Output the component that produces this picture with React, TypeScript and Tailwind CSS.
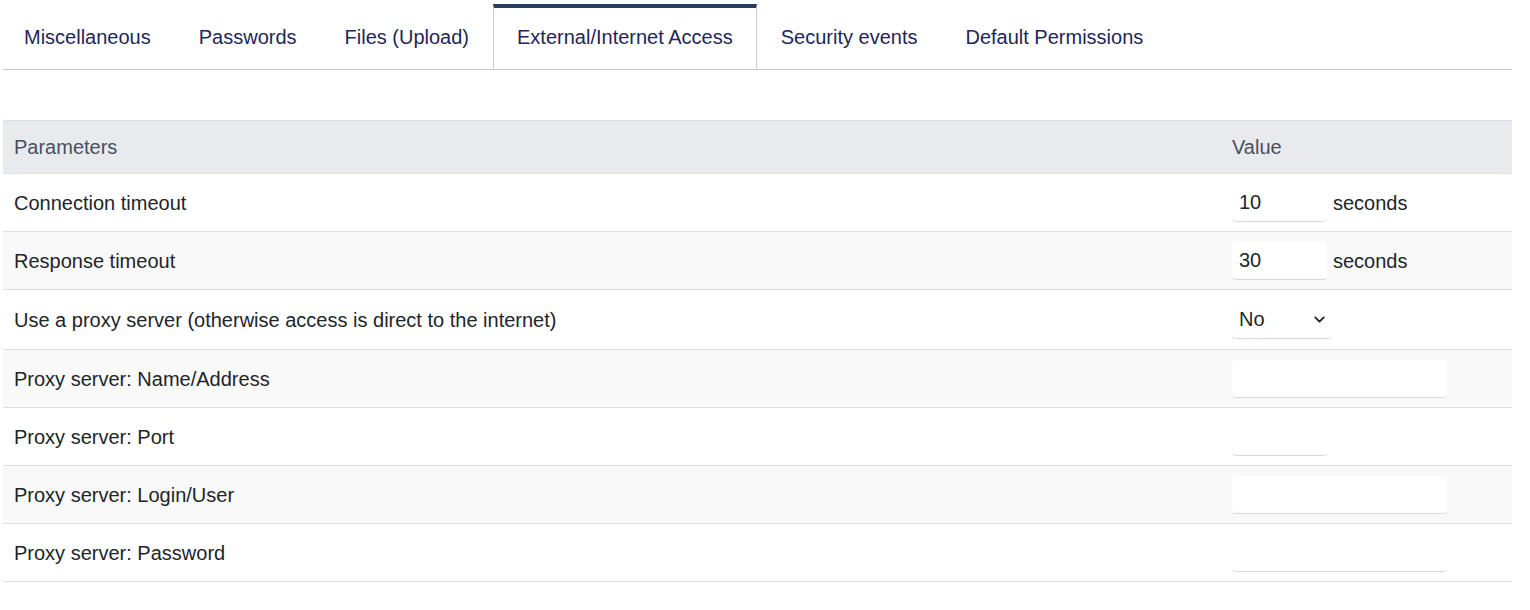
import { ChevronDown } from "lucide-react";

const tabs = [
  "Miscellaneous",
  "Passwords",
  "Files (Upload)",
  "External/Internet Access",
  "Security events",
  "Default Permissions",
];

type Row = {
  label: string;
  kind: "num" | "select" | "wide" | "short";
  value?: string;
  unit?: string;
  tall?: boolean;
};

const rows: Row[] = [
  { label: "Connection timeout", kind: "num", value: "10", unit: "seconds" },
  { label: "Response timeout", kind: "num", value: "30", unit: "seconds" },
  { label: "Use a proxy server (otherwise access is direct to the internet)", kind: "select", value: "No", tall: true },
  { label: "Proxy server: Name/Address", kind: "wide" },
  { label: "Proxy server: Port", kind: "short" },
  { label: "Proxy server: Login/User", kind: "wide" },
  { label: "Proxy server: Password", kind: "wide" },
];

function ValueCell({ row }: { row: Row }) {
  if (row.kind === "select") {
    return (
      <div className="w-[100px] h-[38px] bg-white rounded border-b border-[#d9d9d9] flex items-center justify-between pl-[7px] pr-[4px] text-[#212529]">
        <span>{row.value}</span>
        <ChevronDown size={17} strokeWidth={2.5} className="text-[#222]" />
      </div>
    );
  }
  const width = row.kind === "wide" ? "w-[215px]" : "w-[95px]";
  return (
    <div className="flex items-center gap-[6px]">
      <div className={`${width} h-[38px] bg-white rounded border-b border-[#d9d9d9] flex items-center px-[7px] text-[#212529]`}>
        {row.value}
      </div>
      {row.unit && <span className="text-[#212529]">{row.unit}</span>}
    </div>
  );
}

export default function App() {
  return (
    <div className="bg-white min-h-screen pl-[3px] pr-[18px] pt-[4px] text-[20px] font-['Liberation_Sans',Arial,sans-serif]">
      {/* Tabs */}
      <div className="border-b border-[#c8c8c8]">
        <div className="flex -ml-[3px]">
          {tabs.map((t, i) => {
            const active = i === 3;
            return (
              <div
                key={t}
                className={`h-[65px] px-[23px] pb-[3px] flex items-center border-t-4 border-x text-[#1f2658] ${
                  active ? "border-t-[#283d5c] border-x-[#cfcfcf] bg-white" : "border-transparent"
                }`}
              >
                {t}
              </div>
            );
          })}
        </div>
      </div>

      {/* Table */}
      <div className="mt-[50px] border-t border-[#dedede]">
        <div className="grid grid-cols-[1fr_291px] h-[53px] items-center bg-[#e9eaee] text-[#4a4f5c] border-b border-[#dedede]">
          <div className="px-[11px]">Parameters</div>
          <div className="px-[11px]">Value</div>
        </div>
        {rows.map((r, i) => (
          <div
            key={r.label}
            className={`grid grid-cols-[1fr_291px] items-center border-b border-[#dedede] ${
              r.tall ? "h-[60px]" : "h-[58px]"
            } ${i % 2 === 1 ? "bg-[#f9f9f9]" : "bg-white"}`}
          >
            <div className="px-[11px] text-[#212529]">{r.label}</div>
            <div className="px-[11px]">
              <ValueCell row={r} />
            </div>
          </div>
        ))}
      </div>
    </div>
  );
}
